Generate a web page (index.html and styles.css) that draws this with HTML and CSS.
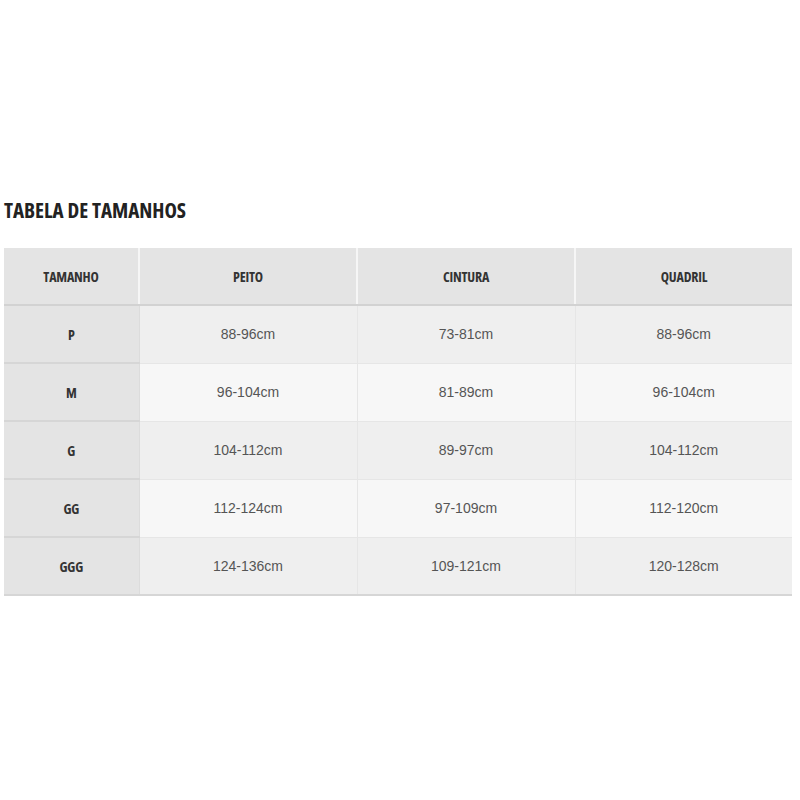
FILE: index.html
```html
<!DOCTYPE html>
<html lang="pt">
<head>
<meta charset="utf-8">
<title>Tabela de Tamanhos</title>
<link rel="stylesheet" href="styles.css">
</head>
<body>
<div class="page">
  <h2 class="title">TABELA DE TAMANHOS</h2>
  <table class="sizes">
    <colgroup>
      <col class="c1">
      <col class="c2">
      <col class="c3">
      <col class="c4">
    </colgroup>
    <thead>
      <tr>
        <th>TAMANHO</th>
        <th>PEITO</th>
        <th>CINTURA</th>
        <th>QUADRIL</th>
      </tr>
    </thead>
    <tbody>
      <tr class="odd"><th>P</th><td>88-96cm</td><td>73-81cm</td><td>88-96cm</td></tr>
      <tr class="even"><th>M</th><td>96-104cm</td><td>81-89cm</td><td>96-104cm</td></tr>
      <tr class="odd"><th>G</th><td>104-112cm</td><td>89-97cm</td><td>104-112cm</td></tr>
      <tr class="even"><th>GG</th><td>112-124cm</td><td>97-109cm</td><td>112-120cm</td></tr>
      <tr class="odd"><th>GGG</th><td>124-136cm</td><td>109-121cm</td><td>120-128cm</td></tr>
    </tbody>
  </table>
</div>
</body>
</html>
```

FILE: styles.css
```css
html, body {
  margin: 0;
  padding: 0;
  background: #ffffff;
}

.page {
  padding: 196px 8px 0 4px;
}

.title {
  margin: 0 0 24px 0;
  font-family: "Open Sans", "DejaVu Sans Condensed", sans-serif;
  font-stretch: 75%;
  font-weight: 700;
  font-size: 21px;
  line-height: 28px;
  letter-spacing: 0;
  color: #222222;
}

.sizes {
  width: 788px;
  border-collapse: collapse;
  table-layout: fixed;
}

.c1 { width: 135px; }
.c2 { width: 218px; }
.c3 { width: 218px; }
.c4 { width: 217px; }

.sizes th,
.sizes td {
  height: 56px;
  padding: 0;
  text-align: center;
  vertical-align: middle;
}

.sizes th {
  font-family: "Open Sans", "DejaVu Sans Condensed", sans-serif;
  font-stretch: 75%;
  font-weight: 700;
  font-size: 14px;
  letter-spacing: -0.2px;
  color: #333333;
}

.sizes thead th {
  height: 56px;
  background: #e4e4e4;
  border-bottom: 2px solid #d2d2d2;
  border-right: 2px solid #f6f6f6;
}

.sizes thead th:last-child {
  border-right: none;
}

.sizes tbody th {
  background: #e4e4e4;
  border-bottom: 2px solid #d6d6d6;
  border-right: 1px solid #dcdcdc;
}

.sizes td {
  font-family: "Liberation Sans", Arial, sans-serif;
  font-size: 14px;
  color: #555555;
  border-bottom: 1px solid #e6e6e6;
  border-right: 1px solid #e6e6e6;
}

.sizes tbody tr:last-child td {
  border-bottom: 2px solid #d6d6d6;
}

.sizes td:last-child {
  border-right: none;
}

.odd td {
  background: #efefef;
}

.even td {
  background: #f7f7f7;
}
```
